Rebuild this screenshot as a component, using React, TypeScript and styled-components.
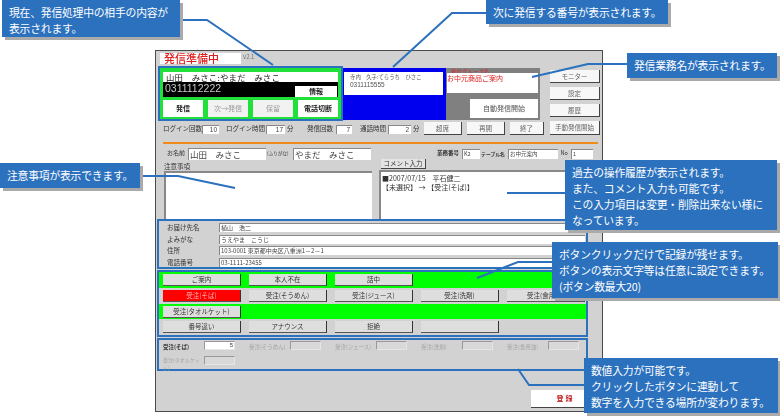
import React from 'react';
import styled, { createGlobalStyle } from 'styled-components';

const GlobalStyle = createGlobalStyle`
  html, body { margin: 0; padding: 0; background: #fff; }
  body { font-family: "Noto Sans CJK JP", "Noto Sans", sans-serif; }
`;

const Canvas = styled.div`
  position: relative;
  width: 780px;
  height: 420px;
  overflow: hidden;
  background: #fff;
  padding: 50px 0 0 155px;
  box-sizing: border-box;
`;

const Window = styled.div`
  width: 448px;
  height: 362px;
  box-sizing: border-box;
  border: 1px solid #4a4a4a;
  background: #d2d2d2;
  display: flex;
  flex-direction: column;
  font-size: 7px;
  line-height: 1.1;
  color: #333;
  filter: blur(0.3px);
`;

const Top = styled.div`
  display: flex;
  padding-left: 2px;
`;

const TopLeft = styled.div`
  width: 388px;
  flex: none;
`;

const TitleBar = styled.div`
  height: 15px;
  padding: 2px 0 0 2px;
  box-sizing: border-box;
  display: flex;
  gap: 2px;
`;

const Title = styled.div`
  width: 81px;
  height: 11px;
  background: #fff;
  color: #e02020;
  font-size: 11px;
  font-weight: 500;
  line-height: 11px;
  padding-left: 4px;
  box-sizing: border-box;
`;

const Version = styled.span`
  font-size: 6px;
  color: #777;
  margin-top: 1px;
`;

const Panels = styled.div`
  display: flex;
  height: 55px;
`;

const CallPanel = styled.div`
  width: 185px;
  box-sizing: border-box;
  border: 2px solid #2b71bd;
  background: #20e03a;
  padding: 4px 3px 2px 3px;
  display: flex;
  flex-direction: column;
`;

const CallName = styled.div`
  height: 10px;
  background: #fff;
  color: #222;
  font-size: 8.4px;
  line-height: 10px;
  padding-left: 3px;
  letter-spacing: 0.2px;
  white-space: pre;
`;

const CallNumber = styled.div`
  height: 16px;
  box-sizing: border-box;
  padding: 1px 1px 0 2px;
  background: #000;
  color: #c8c8c8;
  font-family: "Liberation Sans", sans-serif;
  font-size: 10.5px;
  line-height: 11px;
  display: flex;
  justify-content: space-between;
  align-items: flex-start;
`;

const InfoButton = styled.div`
  width: 42px;
  height: 11px;
  margin-top: 3px;
  background: #fff;
  color: #222;
  font-family: "Noto Sans CJK JP", sans-serif;
  font-size: 7px;
  font-weight: 700;
  line-height: 11px;
  text-align: center;
`;

const CallActions = styled.div`
  display: flex;
  justify-content: space-between;
  margin-top: 3px;
`;

const CallAction = styled.div<{ $off?: boolean }>`
  width: 40px;
  height: 17px;
  background: ${({ $off }) => ($off ? '#f2f2f2' : '#fff')};
  color: ${({ $off }) => ($off ? '#999' : '#222')};
  font-weight: ${({ $off }) => ($off ? 400 : 700)};
  font-size: 7px;
  line-height: 17px;
  text-align: center;
`;

const NextPanel = styled.div`
  width: 103px;
  height: 52px;
  margin-top: 2px;
  background: #0000ee;
  padding: 4px 3px 0 1px;
  box-sizing: border-box;
`;

const NextText = styled.div`
  height: 23px;
  background: #fff;
  color: #555;
  font-size: 5.4px;
  line-height: 8px;
  padding: 1px 0 0 6px;
  box-sizing: border-box;
  white-space: pre;
`;

const NextNumber = styled.div`
  font-family: "Liberation Sans", sans-serif;
  font-size: 6.5px;
`;

const GroupPanel = styled.div`
  width: 94px;
  height: 52px;
  margin-top: 2px;
  background: #808080;
  padding: 0 2px 2px 1px;
  box-sizing: border-box;
  display: flex;
  flex-direction: column;
`;

const GroupLabel = styled.div`
  height: 5px;
  color: #e02020;
  font-size: 5px;
  line-height: 5px;
  padding-left: 4px;
  letter-spacing: 0.6px;
`;

const GroupName = styled.div`
  height: 20px;
  box-sizing: border-box;
  padding-top: 1px;
  background: #fff;
  color: #e02020;
  font-size: 7px;
  line-height: 8px;
`;

const AutoButton = styled.div`
  width: 68px;
  height: 19px;
  margin: 6px 0 0 23px;
  background: #fff;
  color: #555;
  line-height: 19px;
  text-align: center;
`;

const SideButtons = styled.div`
  width: 50px;
  margin-left: 4px;
  padding-top: 19px;
  display: flex;
  flex-direction: column;
  gap: 4px;
`;

const RaisedButton = styled.div<{ $w?: number; $h?: number }>`
  width: ${({ $w }) => $w ?? 50}px;
  height: ${({ $h }) => $h ?? 13}px;
  flex: none;
  box-sizing: border-box;
  background: #f7f7f7;
  border-right: 1px solid #444;
  border-bottom: 1px solid #444;
  color: #666;
  font-size: 6.5px;
  line-height: 12px;
  text-align: center;
  white-space: nowrap;
`;

const Stats = styled.div`
  height: 15px;
  padding-left: 5px;
  display: flex;
  align-items: center;
`;

const Label = styled.span<{ $w: number; $strong?: boolean; $off?: boolean; $size?: number }>`
  width: ${({ $w }) => $w}px;
  flex: none;
  font-size: ${({ $size }) => $size ?? 6.5}px;
  white-space: nowrap;
  color: ${({ $off }) => ($off ? '#a4a4a4' : '#333')};
  font-weight: ${({ $strong }) => ($strong ? 700 : 400)};
`;

const NumBox = styled.span<{ $w: number }>`
  width: ${({ $w }) => $w}px;
  height: 9px;
  margin-top: 2px;
  flex: none;
  box-sizing: border-box;
  background: #fff;
  border-top: 1px solid #888;
  border-left: 1px solid #888;
  font-family: "Liberation Sans", sans-serif;
  font-size: 6.5px;
  line-height: 8px;
  padding-right: 2px;
  text-align: right;
  color: #444;
`;

const Unit = styled.span<{ $w: number }>`
  width: ${({ $w }) => $w}px;
  flex: none;
  padding-left: 2px;
  box-sizing: border-box;
  font-size: 6.5px;
`;

const StatButtons = styled.div`
  display: flex;
  gap: 5px;
  margin-left: 10px;
`;

const Rule = styled.div`
  height: 2px;
  width: 435px;
  margin: 6px 0 0 7px;
  background: #f08a1c;
  flex: none;
`;

const NameRow = styled.div`
  height: 11px;
  margin-top: 4px;
  padding-left: 11px;
  display: flex;
  align-items: center;
  flex: none;
`;

const TextBox = styled.span<{ $w: number; $big?: boolean }>`
  width: ${({ $w }) => $w}px;
  height: ${({ $big }) => ($big ? 12 : 10)}px;
  flex: none;
  box-sizing: border-box;
  background: #fff;
  border-top: 1px solid #888;
  border-left: 1px solid #888;
  color: #444;
  font-size: ${({ $big }) => ($big ? 8.5 : 5.5)}px;
  line-height: ${({ $big }) => ($big ? 11 : 8)}px;
  padding-left: 1px;
  white-space: pre;
  overflow: hidden;
`;

const NotesRow = styled.div`
  height: 60px;
  padding-left: 8px;
  display: flex;
  gap: 7px;
  flex: none;
`;

const NotesCol = styled.div<{ $w: number }>`
  width: ${({ $w }) => $w}px;
  display: flex;
  flex-direction: column;
`;

const NotesLabel = styled.div`
  height: 12px;
  padding-top: 4px;
  box-sizing: border-box;
  font-size: 6.5px;
`;

const NotesArea = styled.div`
  flex: 1;
  background: #fff;
  border-top: 2px solid #888;
  border-left: 2px solid #888;
  box-sizing: border-box;
  color: #333;
  font-size: 7px;
  line-height: 9px;
  padding: 2px 0 0 1px;
  white-space: pre;
`;

const CommentButton = styled(RaisedButton)`
  margin: 0 0 1px 2px;
  background: #e4e4e4;
  color: #333;
  line-height: 9px;
`;

const FrameBox = styled.div`
  width: 431px;
  margin-left: 1px;
  box-sizing: border-box;
  border: 2px solid #2b71bd;
  flex: none;
`;

const DeliveryBox = styled(FrameBox)`
  height: 50px;
  padding: 2px 1px 0 8px;
  display: flex;
  flex-direction: column;
  gap: 2px;
`;

const DeliveryRow = styled.div`
  display: flex;
  height: 10px;
  align-items: center;
`;

const DeliveryValue = styled(TextBox)`
  flex: 1;
  width: auto;
  height: 9px;
  font-size: 6px;
`;

const ButtonBox = styled(FrameBox)`
  height: 67px;
  margin-top: 1px;
`;

const ButtonRow = styled.div<{ $green?: boolean; $h: number }>`
  height: ${({ $h }) => $h}px;
  padding: 2px 0 0 4px;
  box-sizing: border-box;
  background: ${({ $green }) => ($green ? '#00ff00' : '#d2d2d2')};
  display: flex;
  gap: 8px;
`;

const ActionButton = styled(RaisedButton)<{ $red?: boolean }>`
  background: ${({ $red }) => ($red ? '#ff0000' : '#dedede')};
  color: ${({ $red }) => ($red ? '#ffb0b0' : '#333')};
  height: 12px;
  width: 78px;
  line-height: 11px;
  border-right: 1px solid #333;
  border-bottom: 1px solid #555;
`;

const InputBox = styled(FrameBox)`
  height: 33px;
  margin-top: 1px;
  padding: 1px 0 0 4px;
`;

const InputRow = styled.div`
  display: flex;
  height: 15px;
`;

const QtyLabel = styled(Label)`
  padding-top: 3px;
  line-height: 7.5px;
`;

const WrappedQtyLabel = styled(Label)`
  line-height: 7.5px;
`;

const QtyBox = styled.span<{ $on?: boolean }>`
  width: 31px;
  height: 9px;
  margin-right: 14px;
  flex: none;
  box-sizing: border-box;
  background: ${({ $on }) => ($on ? '#fff' : '#d8d8d8')};
  border-top: 1px solid #999;
  border-left: 1px solid #999;
  border-right: 1px solid #e6e6e6;
  border-bottom: 1px solid #e6e6e6;
  font-family: "Liberation Sans", sans-serif;
  font-size: 6px;
  line-height: 6px;
  text-align: right;
  padding-right: 1px;
`;

const SaveRow = styled.div`
  margin: 19px 0 0 375px;
  flex: none;
`;

const SaveButton = styled(RaisedButton)`
  background: #fff;
  color: #c02020;
  font-weight: 700;
  font-size: 7px;
  line-height: 17px;
  letter-spacing: 2px;
`;

const Callout = styled.div<{ $x: number; $y: number; $w: number; $h: number }>`
  position: absolute;
  left: ${({ $x }) => $x}px;
  top: ${({ $y }) => $y}px;
  width: ${({ $w }) => $w}px;
  height: ${({ $h }) => $h}px;
  box-sizing: border-box;
  padding: 4px 0 0 7px;
  background: #2b71bd;
  box-shadow: 3px 3px 0 #aaa;
  color: #fff;
  font-size: 10.8px;
  letter-spacing: -0.2px;
  line-height: 16px;
  white-space: pre;
`;

const Leaders = styled.svg`
  position: absolute;
  inset: 0;
  pointer-events: none;
`;

const leaderLines = [
  '180,20 207,20 273,65',
  '486,13 452,13 393,67',
  '627,64 588,64 532,77',
  '140,176 178,176 235,188',
  '565,193 507,193',
  '552,262 518,262 477,278',
  '584,385 529,385 518,369',
];

const orders = ['受注(そば)', '受注(そうめん)', '受注(ジュース)', '受注(洗剤)', '受注(食用油)'];

const App: React.FC = () => (
  <Canvas>
    <GlobalStyle />
    <Window>
      <Top>
        <TopLeft>
          <TitleBar>
            <Title>発信準備中</Title>
            <Version>v2.1</Version>
          </TitleBar>
          <Panels>
            <CallPanel>
              <CallName>{'山田　みさこ:やまだ　みさこ'}</CallName>
              <CallNumber>
                0311112222
                <InfoButton>情報</InfoButton>
              </CallNumber>
              <CallActions>
                <CallAction>発信</CallAction>
                <CallAction $off>次→発信</CallAction>
                <CallAction $off>保留</CallAction>
                <CallAction>電話切断</CallAction>
              </CallActions>
            </CallPanel>
            <NextPanel>
              <NextText>
                {'寺内　久子:てらうち　ひさこ'}
                <NextNumber>0311115555</NextNumber>
              </NextText>
            </NextPanel>
            <GroupPanel>
              <GroupLabel>発信グループ名</GroupLabel>
              <GroupName>お中元商品ご案内</GroupName>
              <AutoButton>自動発信開始</AutoButton>
            </GroupPanel>
          </Panels>
          <Stats>
            <Label $w={39}>ログイン回数</Label>
            <NumBox $w={17}>10</NumBox>
            <Label $w={7} />
            <Label $w={40}>ログイン時間</Label>
            <NumBox $w={19}>17</NumBox>
            <Unit $w={22}>分</Unit>
            <Label $w={29}>発信回数</Label>
            <NumBox $w={16}>7</NumBox>
            <Label $w={8} />
            <Label $w={28}>通話時間</Label>
            <NumBox $w={23}>2</NumBox>
            <Unit $w={3}>分</Unit>
            <StatButtons>
              <RaisedButton $w={38}>超席</RaisedButton>
              <RaisedButton $w={38}>再開</RaisedButton>
              <RaisedButton $w={34}>終了</RaisedButton>
            </StatButtons>
          </Stats>
        </TopLeft>
        <SideButtons>
          <RaisedButton>モニター</RaisedButton>
          <RaisedButton>設定</RaisedButton>
          <RaisedButton>履歴</RaisedButton>
          <RaisedButton $h={14}>手動発信開始</RaisedButton>
        </SideButtons>
      </Top>
      <Rule />
      <NameRow>
        <Label $w={21} $size={6}>お名前</Label>
        <TextBox $w={78} $big>{'山田　みさこ'}</TextBox>
        <Label $w={27} $size={4.6}>&nbsp;(ふりがな)</Label>
        <TextBox $w={78} $big>{'やまだ　みさこ'}</TextBox>
        <Label $w={66} />
        <Label $w={25} $size={5.5} $strong>業務番号</Label>
        <TextBox $w={18}>K2</TextBox>
        <Label $w={28} $size={4.8} $strong>&nbsp;テーブル名</Label>
        <TextBox $w={50}>お中元案内</TextBox>
        <Label $w={13} $size={5.5}>&nbsp;&nbsp;No</Label>
        <TextBox $w={22}>1</TextBox>
      </NameRow>
      <NotesRow>
        <NotesCol $w={208}>
          <NotesLabel>注意事項</NotesLabel>
          <NotesArea />
        </NotesCol>
        <NotesCol $w={218}>
          <CommentButton $w={45} $h={10}>コメント入力</CommentButton>
          <NotesArea>{'■2007/07/15　平石健二\n【未選択】 → 【受注(そば)】'}</NotesArea>
        </NotesCol>
      </NotesRow>
      <DeliveryBox>
        <DeliveryRow><Label $w={52}>お届け先名</Label><DeliveryValue $w={0}>{'植山　浩二'}</DeliveryValue></DeliveryRow>
        <DeliveryRow><Label $w={52}>よみがな</Label><DeliveryValue $w={0}>{'うえやま　こうじ'}</DeliveryValue></DeliveryRow>
        <DeliveryRow><Label $w={52}>住所</Label><DeliveryValue $w={0}>103-0001 東京都中央区八重洲1－2－1</DeliveryValue></DeliveryRow>
        <DeliveryRow><Label $w={52}>電話番号</Label><DeliveryValue $w={0}>03-1111-23455</DeliveryValue></DeliveryRow>
      </DeliveryBox>
      <ButtonBox>
        <ButtonRow $green $h={16}>
          <ActionButton>ご案内</ActionButton>
          <ActionButton>本人不在</ActionButton>
          <ActionButton>話中</ActionButton>
        </ButtonRow>
        <ButtonRow $h={16}>
          {orders.map((o, i) => (
            <ActionButton key={o} $red={i === 0}>{o}</ActionButton>
          ))}
        </ButtonRow>
        <ButtonRow $green $h={15}>
          <ActionButton>受注(タオルケット)</ActionButton>
        </ButtonRow>
        <ButtonRow $h={16}>
          <ActionButton>番号違い</ActionButton>
          <ActionButton>アナウンス</ActionButton>
          <ActionButton>拒絶</ActionButton>
          <ActionButton />
        </ButtonRow>
      </ButtonBox>
      <InputBox>
        <InputRow>
          {orders.map((o, i) => (
            <React.Fragment key={o}>
              <QtyLabel $w={41} $size={5.5} $strong={i === 0} $off={i !== 0}>{o}</QtyLabel>
              <QtyBox $on={i === 0}>{i === 0 ? '5' : ''}</QtyBox>
            </React.Fragment>
          ))}
        </InputRow>
        <InputRow>
          <WrappedQtyLabel $w={41} $size={5} $off>受注(タオルケッ<br />ト)</WrappedQtyLabel>
          <QtyBox />
        </InputRow>
      </InputBox>
      <SaveRow>
        <SaveButton $w={70} $h={18}>登録</SaveButton>
      </SaveRow>
    </Window>

    <Leaders width="780" height="420" viewBox="0 0 780 420">
      {leaderLines.map((p) => (
        <polyline key={p} points={p} fill="none" stroke="#2b71bd" strokeWidth="2" />
      ))}
    </Leaders>

    <Callout $x={2} $y={0} $w={178} $h={37}>{'現在、発信処理中の相手の内容が\n表示されます。'}</Callout>
    <Callout $x={486} $y={0} $w={182} $h={24}>次に発信する番号が表示されます。</Callout>
    <Callout $x={627} $y={53} $w={150} $h={25}>発信業務名が表示されます。</Callout>
    <Callout $x={0} $y={163} $w={140} $h={25}>注意事項が表示できます。</Callout>
    <Callout $x={565} $y={160} $w={212} $h={70}>{'過去の操作履歴が表示されます。\nまた、コメント入力も可能です。\nこの入力項目は変更・削除出来ない様に\nなっています。'}</Callout>
    <Callout $x={552} $y={242} $w={226} $h={56}>{'ボタンクリックだけで記録が残せます。\nボタンの表示文字等は任意に設定できます。\n(ボタン数最大20)'}</Callout>
    <Callout $x={584} $y={358} $w={194} $h={55}>{'数値入力が可能です。\nクリックしたボタンに連動して\n数字を入力できる場所が変わります。'}</Callout>
  </Canvas>
);

export default App;
